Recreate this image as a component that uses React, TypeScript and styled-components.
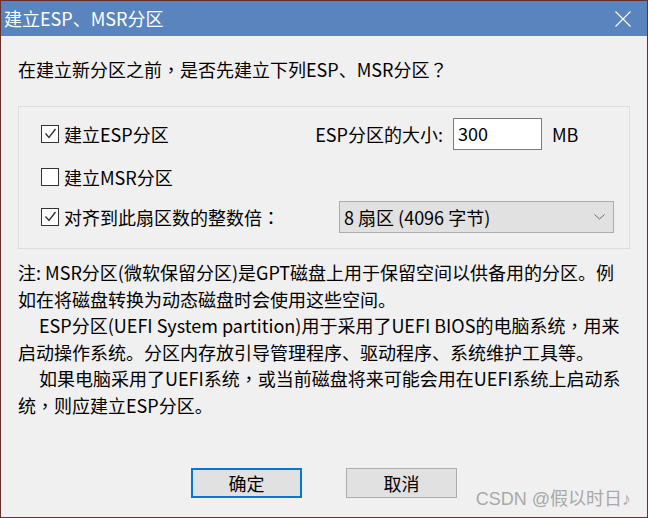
import React from 'react';
import styled, { createGlobalStyle } from 'styled-components';

const GlobalStyle = createGlobalStyle`
  html, body {
    margin: 0;
    padding: 0;
    background: #f0f0f0;
  }
  * {
    box-sizing: border-box;
  }
`;

const FONT = `"Noto Sans CJK SC", "Noto Sans", sans-serif`;

const Window = styled.div`
  position: relative;
  display: flex;
  flex-direction: column;
  width: 648px;
  height: 518px;
  border: 1px solid #66302a;
  background: #f0f0f0;
  font-family: ${FONT};
  font-size: 18px;
  color: #000;
  overflow: hidden;
`;

const TitleBar = styled.div`
  display: flex;
  align-items: center;
  justify-content: space-between;
  height: 35px;
  padding: 0 16px 0 3px;
  background: #5a84bd;
  color: #fff;
`;

const Title = styled.span`
  font-size: 18px;
  line-height: 35px;
`;

const Body = styled.div`
  display: flex;
  flex-direction: column;
  flex: 1;
  padding: 20px 17px 19px 17px;
`;

const Question = styled.div`
  line-height: 26px;
  white-space: nowrap;
`;

// full-width punctuation sits centred in the reference font
const Punct = styled.span`
  font-family: "Noto Sans CJK TC", sans-serif;
`;

const GroupBox = styled.div`
  margin-top: 24px;
  border: 1px solid #dcdcdc;
  padding: 11px 15px 15px 22px;
`;

const Row = styled.div<{ $gap?: number }>`
  display: flex;
  align-items: center;
  height: 32px;
  margin-top: ${(p) => p.$gap ?? 0}px;
`;

const CheckItem = styled.label`
  display: flex;
  align-items: center;
  flex: 1;
  gap: 5px;
  white-space: nowrap;
`;

const Box = styled.span`
  display: flex;
  align-items: center;
  justify-content: center;
  width: 18px;
  height: 18px;
  border: 1px solid #333;
  background: #fff;
`;

const FieldLabel = styled.span`
  margin-right: 10px;
  white-space: nowrap;
`;

const TextInput = styled.div`
  width: 89px;
  height: 32px;
  padding-left: 4px;
  border: 1px solid #7a7a7a;
  background: #fff;
  line-height: 29px;
`;

const Unit = styled.span`
  width: 72px;
  padding-left: 10px;
`;

const Select = styled.div`
  display: flex;
  align-items: center;
  justify-content: space-between;
  width: 275px;
  height: 32px;
  padding: 0 8px 0 4px;
  border: 1px solid #adadad;
  background: #e1e1e1;
  white-space: nowrap;
`;

const Notes = styled.div`
  margin-top: 10px;
  line-height: 26.5px;
  white-space: nowrap;
`;

const Para = styled.div<{ $indent?: boolean }>`
  text-indent: ${(p) => (p.$indent ? '21px' : '0')};
`;

const Buttons = styled.div`
  display: flex;
  justify-content: center;
  gap: 44px;
  margin-top: auto;
`;

const Button = styled.div<{ $primary?: boolean }>`
  display: flex;
  align-items: center;
  justify-content: center;
  width: 111px;
  height: 30px;
  background: #e1e1e1;
  border: ${(p) => (p.$primary ? '2px solid #0078d7' : '1px solid #adadad')};
`;

const Watermark = styled.div`
  position: absolute;
  right: 16px;
  bottom: 7px;
  font-family: "Liberation Sans", "Noto Sans CJK SC", sans-serif;
  font-size: 18px;
  color: #a9a9a9;
  white-space: nowrap;
`;

const Check = ({ checked }: { checked: boolean }) => (
  <Box>
    {checked && (
      <svg width="16" height="16" viewBox="0 0 16 16">
        <path d="M3.5 7.5 L7 11.5 L13.5 3" fill="none" stroke="#333" strokeWidth="1.4" />
      </svg>
    )}
  </Box>
);

const App = (): JSX.Element => {
  return (
    <>
      <GlobalStyle />
      <Window>
        <TitleBar>
          <Title>建立ESP、MSR分区</Title>
          <svg width="16" height="16" viewBox="0 0 16 16">
            <path d="M0.5 0.5 L15.5 15.5 M15.5 0.5 L0.5 15.5" stroke="#fff" strokeWidth="1.1" />
          </svg>
        </TitleBar>
        <Body>
          <Question>
            在建立新分区之前<Punct>，</Punct>是否先建立下列ESP、MSR分区<Punct>？</Punct>
          </Question>
          <GroupBox>
            <Row>
              <CheckItem>
                <Check checked />
                建立ESP分区
              </CheckItem>
              <FieldLabel>ESP分区的大小:</FieldLabel>
              <TextInput>300</TextInput>
              <Unit>MB</Unit>
            </Row>
            <Row $gap={11}>
              <CheckItem>
                <Check checked={false} />
                建立MSR分区
              </CheckItem>
            </Row>
            <Row $gap={8}>
              <CheckItem>
                <Check checked />
                <span>
                  对齐到此扇区数的整数倍<Punct>：</Punct>
                </span>
              </CheckItem>
              <Select>
                <span>8 扇区 (4096 字节)</span>
                <svg width="11" height="6" viewBox="0 0 11 6">
                  <path d="M0.5 0.5 L5.5 5 L10.5 0.5" fill="none" stroke="#6d6d6d" strokeWidth="1" />
                </svg>
              </Select>
            </Row>
          </GroupBox>
          <Notes>
            <Para>
              注: MSR分区(微软保留分区)是GPT磁盘上用于保留空间以供备用的分区。例
              <br />
              如在将磁盘转换为动态磁盘时会使用这些空间。
            </Para>
            <Para $indent>
              ESP分区(UEFI System partition)用于采用了UEFI BIOS的电脑系统<Punct>，</Punct>用来
              <br />
              启动操作系统。分区内存放引导管理程序、驱动程序、系统维护工具等。
            </Para>
            <Para $indent>
              如果电脑采用了UEFI系统<Punct>，</Punct>或当前磁盘将来可能会用在UEFI系统上启动系
              <br />
              统<Punct>，</Punct>则应建立ESP分区。
            </Para>
          </Notes>
          <Buttons>
            <Button $primary>确定</Button>
            <Button>取消</Button>
          </Buttons>
        </Body>
        <Watermark>CSDN @假以时日♪</Watermark>
      </Window>
    </>
  );
};

export default App;
